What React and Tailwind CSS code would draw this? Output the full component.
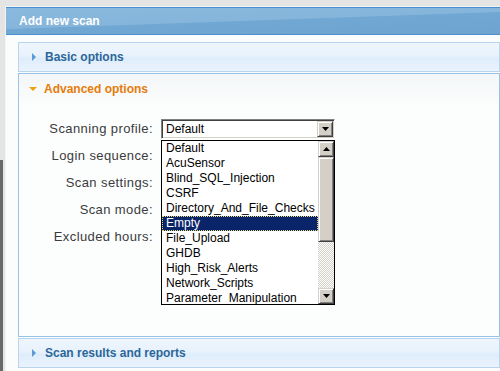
import React from 'react'

const FONT = { fontFamily: '"Liberation Sans", Arial, sans-serif' }

const profiles = [
  'Default',
  'AcuSensor',
  'Blind_SQL_Injection',
  'CSRF',
  'Directory_And_File_Checks',
  'Empty',
  'File_Upload',
  'GHDB',
  'High_Risk_Alerts',
  'Network_Scripts',
  'Parameter_Manipulation',
]

const fields = ['Scanning profile:', 'Login sequence:', 'Scan settings:', 'Scan mode:', 'Excluded hours:']

const Arrow = ({ up }) => (
  <svg width="7" height="4" viewBox="0 0 7 4" className="block">
    {up ? <path d="M3.5 0L7 4H0z" fill="#000" /> : <path d="M0 0h7L3.5 4z" fill="#000" />}
  </svg>
)

// classic win98-style raised button
const Raised = ({ className = '', children }) => (
  <div
    className={`bg-[#d4d0c8] border border-t-[#d4d0c8] border-l-[#d4d0c8] border-r-[#404040] border-b-[#404040] shadow-[inset_1px_1px_#fff,inset_-1px_-1px_#808080] flex items-center justify-center ${className}`}
  >
    {children}
  </div>
)

const SectionBar = ({ title }) => (
  <div className="h-[30px] border border-[#b9d5ee] bg-[linear-gradient(#eef5fd_0%,#e8f2fc_45%,#deedfa_55%,#eaf3fd_100%)] flex items-center pl-[13px]">
    <svg width="4" height="8" viewBox="0 0 4 8" className="block">
      <path d="M0 0L4 4L0 8z" fill="#5b9ad3" />
    </svg>
    <span className="ml-[9px] text-[12px] font-bold text-[#2c6699]">{title}</span>
  </div>
)

export default function App() {
  return (
    <div className="w-[500px] h-[371px] bg-[#e4e4e4] flex overflow-hidden" style={FONT}>
      <div className="w-[3px] flex flex-col">
        <div className="h-[160px]" />
        <div className="flex-1 bg-[#686868]" />
      </div>
      <div className="flex-1 mt-[6px] ml-[2px] border-t border-l border-[#f2f4f4] bg-[#fbfdfd] flex flex-col">
        {/* title bar */}
        <div className="h-[28px] border-t border-b border-[#4a8fce] bg-[linear-gradient(178deg,#89b9dd_0%,#85b5da_48%,#71a8d3_50%,#6ea4d0_100%)] flex items-center pl-[13px]">
          <span className="text-[12px] font-bold text-white">Add new scan</span>
        </div>

        <div className="pl-[12px] pt-[7px] flex flex-col">
          <SectionBar title="Basic options" />

          {/* advanced options, expanded */}
          <div className="mt-[1px] h-[264px] border border-[#98c3e7] bg-[#fcfefe] flex flex-col">
            <div className="h-[30px] bg-[linear-gradient(#f3f6f8,#fbfcfc)] flex items-center pl-[10px]">
              <svg width="8" height="4" viewBox="0 0 8 4" className="block">
                <path d="M0 0h8L4 4z" fill="#f2a20c" />
              </svg>
              <span className="ml-[7px] text-[12px] font-bold text-[#e67c0a]">Advanced options</span>
            </div>

            <div className="pt-[11px] flex flex-col">
              {fields.map((label, i) => (
                <div key={label} className="h-[27px] flex items-center">
                  <div className="w-[134px] text-right text-[13px] tracking-[0.4px] text-[#3b3b3b]">{label}</div>
                  {i === 0 ? (
                    <div className="relative ml-[8px]">
                      <div className="w-[174px] h-[20px] bg-white border border-t-[#808080] border-l-[#808080] border-r-white border-b-white shadow-[inset_1px_1px_#404040,inset_-1px_-1px_#d4d0c8] flex items-center p-[1px]">
                        <span className="flex-1 pl-[3px] text-[12px] text-black leading-none">Default</span>
                        <Raised className="w-[16px] h-[16px]">
                          <Arrow />
                        </Raised>
                      </div>

                      {/* open listbox */}
                      <div className="absolute top-[21px] left-0 z-10 w-[174px] h-[165px] bg-white border border-black flex">
                        <div className="flex-1 flex flex-col">
                          {profiles.map((p) => (
                            <div
                              key={p}
                              className={`h-[15px] pl-[3px] text-[12px] leading-[13px] whitespace-nowrap border ${
                                p === 'Empty'
                                  ? 'bg-[#0a246a] text-white border-dotted border-[#e8d978]'
                                  : 'text-black border-transparent'
                              }`}
                            >
                              {p}
                            </div>
                          ))}
                        </div>
                        <div className="w-[16px] flex flex-col">
                          <Raised className="h-[16px]">
                            <Arrow up />
                          </Raised>
                          <Raised className="h-[85px]" />
                          <div className="flex-1 bg-[repeating-conic-gradient(#d4d0c8_0_25%,#ffffff_0_50%)] bg-[length:2px_2px]" />
                          <Raised className="h-[16px]">
                            <Arrow />
                          </Raised>
                        </div>
                      </div>
                    </div>
                  ) : null}
                </div>
              ))}
            </div>
          </div>

          <div className="mt-[1px]">
            <SectionBar title="Scan results and reports" />
          </div>
        </div>
      </div>
    </div>
  )
}
